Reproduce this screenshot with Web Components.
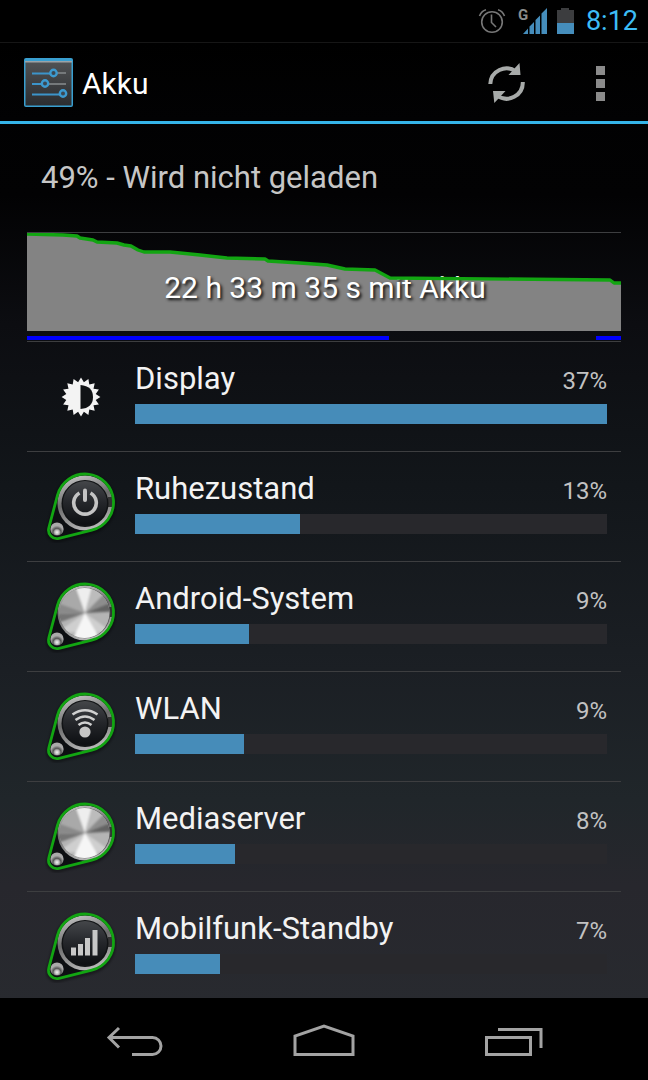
<!DOCTYPE html>
<html lang="de">
<head>
<meta charset="utf-8">
<meta name="viewport" content="width=device-width, initial-scale=1">
<title>Akku</title>
<style>
  html { background: #000; }
  body { margin: 0; font-family: Roboto, "Open Sans", sans-serif; color: #f3f3f3; }
</style>
</head>
<body>
<battery-screen>
  <status-bar slot="status" time="8:12"></status-bar>
  <action-bar slot="header">Akku</action-bar>
  <battery-summary>49% - Wird nicht geladen</battery-summary>
  <battery-chart>22 h 33 m 35 s mit Akku</battery-chart>
  <usage-row icon="display" percent="37%" level="1000">Display</usage-row>
  <usage-row icon="power" percent="13%" level="350">Ruhezustand</usage-row>
  <usage-row icon="metal" percent="9%" level="241">Android-System</usage-row>
  <usage-row icon="wifi" percent="9%" level="230">WLAN</usage-row>
  <usage-row icon="metal" percent="8%" level="211">Mediaserver</usage-row>
  <usage-row icon="signal" percent="7%" level="180">Mobilfunk-Standby</usage-row>
  <nav-bar slot="nav"></nav-bar>
</battery-screen>

<script>
class Base extends HTMLElement {
  constructor() {
    super();
    this.attachShadow({ mode: 'open' });
  }
  connectedCallback() {
    this.shadowRoot.innerHTML = this.render();
  }
}

customElements.define('battery-screen', class extends Base {
  render() {
    return `<style>
      :host { display: flex; flex-direction: column; min-height: 100vh;
        background: linear-gradient(#000 0, #020203 18%, #0c0d11 30%, #12161a 45%, #1b1f24 62%, #20262a 74%, #27272d 82%, #282a2f 93%); }
      main { flex: 1; padding: 0 27px; }
    </style>
    <slot name="status"></slot>
    <slot name="header"></slot>
    <main><slot></slot></main>
    <slot name="nav"></slot>`;
  }
});

customElements.define('status-bar', class extends Base {
  render() {
    return `<style>
      :host { display: flex; align-items: center; justify-content: flex-end; height: 42px;
        padding-right: 10px; background: #000; border-bottom: 1px solid #161616; }
      svg { display: block; flex: none; }
      time { margin-left: 11px; font-size: 27px; line-height: 44px; color: #3dbdf5; }
    </style>
    <svg width="98" height="42" viewBox="477 0 98 42" role="img" aria-label="Wecker, Mobilfunk, Akku">
      <g fill="none" stroke="#777" stroke-width="1.6">
        <circle cx="492" cy="22" r="10.3"/>
        <path d="M491.500 14.500V22.500L496 27M479.500 16Q481.500 11 486 9.800M504.500 16Q502.500 11 498 9.800"/>
      </g>
      <text x="518" y="20" font-family="Roboto, sans-serif" font-weight="700" font-size="15" fill="#8c8c8c">G</text>
      <path fill="#458dbb" d="M523 34L528 28.500V34ZM529.500 26.500L534 22V34H529.500ZM535.500 20L540 15.500V34H535.500ZM541.500 13.500L547 8V34H541.500Z"/>
      <path fill="#3c3d3f" d="M557 10H561V8H569V10H574V34H557Z"/>
      <path fill="#458dbb" d="M557 23H574V34H557Z"/>
    </svg>
    <time>${this.getAttribute('time')}</time>`;
  }
});

customElements.define('action-bar', class extends Base {
  render() {
    return `<style>
      :host { display: flex; align-items: center; height: 78px; padding: 0 21px 0 24px;
        background: linear-gradient(#000, #020203); border-bottom: 3px solid #35b4e8; }
      svg { display: block; }
      h1 { flex: 1; margin: 0 0 0 9px; padding-top: 4px; font-size: 30px; line-height: 40px; font-weight: 400; color: #fff; }
      button { display: grid; place-items: center; height: 78px; width: 54px; padding: 2px 0 0;
        border: 0; background: none; }
      button + button { margin-left: 40px; }
    </style>
    <svg width="49" height="49" viewBox="0 0 49 49" aria-hidden="true">
      <defs><linearGradient id="g" x2="0" y2="1"><stop stop-color="#505254"/><stop offset="1" stop-color="#2b2d30"/></linearGradient></defs>
      <rect width="49" height="49" rx="2" fill="#399fd0"/>
      <rect x="1.500" y="4" width="46" height="43.500" fill="url(#g)"/>
      <rect x="1" y="3" width="47" height="1.500" fill="#9ba3a7"/>
      <g stroke-width="1.800">
        <path stroke="#75797b" d="M30 15H42M22 26H42"/>
        <path stroke="#3c94c9" d="M8 15.500H27M8 26H18M8 36.500H36"/>
      </g>
      <g fill="#3b4853" stroke="#3c9ad0" stroke-width="2.400">
        <circle cx="29.500" cy="15" r="3.200"/><circle cx="21" cy="25.500" r="3.200"/><circle cx="39" cy="35.500" r="3.200"/>
      </g>
    </svg>
    <h1><slot></slot></h1>
    <button aria-label="Aktualisieren">
      <svg width="40" height="42" viewBox="486 62 40 42">
        <g fill="none" stroke="#a7aaa9" stroke-width="4">
          <path d="M490.300 84A16.200 16.200 0 0 1 516 71.500M522.800 82A16.200 16.200 0 0 1 497 95.500"/>
        </g>
        <path fill="#a7aaa9" d="M519.500 63L520.500 75H508.500ZM493 91H505.500L494.300 103Z"/>
      </svg>
    </button>
    <button aria-label="Weitere Optionen">
      <svg width="9" height="35" viewBox="0 0 9 35"><path fill="#8b8b8b" d="M0 0H9V9H0ZM0 13H9V22H0ZM0 26H9V35H0Z"/></svg>
    </button>`;
  }
});

customElements.define('battery-summary', class extends Base {
  render() {
    return `<style>
      :host { display: block; padding: 34px 14px; font-size: 31px; line-height: 40px; color: #c6c6c6;
        border-bottom: 1px solid #3d3e40; }
    </style><slot></slot>`;
  }
});

customElements.define('battery-chart', class extends Base {
  render() {
    const line = '0,2 36,3 50,4 53,6 66,8 70,10 90,11 97,13 104,14 111,18 117,20 143,20 173,23 200,26 238,27 241,29 273,31 300,33 318,37 348,38 363,46 583,48 587,51 594,51';
    return `<style>
      :host { display: grid; height: 108px; border-bottom: 1px solid #3d3e40; }
      svg, p { grid-area: 1 / 1; }
      svg { display: block; width: 100%; height: 108px; }
      p { margin: 0; align-self: center; text-align: center; padding: 2px 0 0 2px; font-size: 30px; line-height: 40px;
        color: #fff; text-shadow: 2px 2px 3px #111; }
    </style>
    <svg viewBox="0 1 594 108" preserveAspectRatio="none" aria-hidden="true">
      <polygon fill="#838383" points="${line} 594,99 0,99"/>
      <path fill="#00f" d="M0 104H362V108H0ZM569 104H594V108H569Z"/>
    </svg>
    <p><slot></slot></p>
    <svg viewBox="0 1 594 108" preserveAspectRatio="none" aria-hidden="true">
      <polyline fill="none" stroke="#12a512" stroke-width="3.400" stroke-linejoin="round" points="${line}"/>
    </svg>`;
  }
});

const wedge = (a, b, fill) => {
  const p = d => `${(40 + 34 * Math.cos(d * Math.PI / 180)).toFixed(1)} ${(33 + 34 * Math.sin(d * Math.PI / 180)).toFixed(1)}`;
  return `<path fill="${fill}" d="M40 33L${p(a)}L${p(b)}Z"/>`;
};

const symbols = {
  power: `<g fill="none" stroke="#c4c4c4" stroke-width="3.600"><path d="M34.500 23A11.300 11.300 0 1 0 45.500 23"/><path stroke-width="4" stroke-linecap="round" d="M40 20.500V30"/></g>`,
  wifi: `<g fill="none" stroke="#d0d0d0" stroke-width="2.600"><path d="M27.500 24.500Q40 16 52.500 24.500M30.500 30Q40 23 49.500 30M33.500 35Q40 30 46.500 35"/></g><circle cx="40" cy="42" r="5.600" fill="#c6c6c6"/>`,
  signal: `<path fill="#c8c8c8" d="M26 37.500H31V45.500H26ZM33 34H38V45.500H33ZM40 28H45V45.500H40ZM47.500 20H52.500V45.500H47.500Z"/>`
};

function knob(kind) {
  const metal = kind === 'metal';
  return `<svg width="72" height="72" viewBox="0 1 72 72" aria-hidden="true">
    <defs>
      <linearGradient id="ring" x1=".3" x2=".6" y2="1"><stop stop-color="#c2c2c2"/><stop offset=".45" stop-color="#6c6c6c"/><stop offset="1" stop-color="#bcbcbc"/></linearGradient>
      <linearGradient id="dark" x2="0" y2="1"><stop stop-color="#45474a"/><stop offset=".5" stop-color="#24262a"/><stop offset="1" stop-color="#0d0f12"/></linearGradient>
      <radialGradient id="ball" cy=".75"><stop stop-color="#f4f4f4"/><stop offset=".35" stop-color="#b5b5b5"/><stop offset=".6" stop-color="#555"/><stop offset="1" stop-color="#aaa"/></radialGradient>
      <clipPath id="disc"><circle cx="39.500" cy="33" r="25"/></clipPath>
      <filter id="soft"><feGaussianBlur stdDeviation="1.300"/></filter>
    </defs>
    <path d="M12.500 25.200A28.500 28.500 0 1 1 46.800 60.200L14 68.300A8.500 8.500 0 0 1 3.800 57.800Z" transform="translate(0 1.500)" stroke="#000" stroke-width="5" opacity=".35" filter="url(#soft)"/>
    <path fill="#0d0f12" d="M12.500 25.200A28.500 28.500 0 1 1 46.800 60.200L14 68.300A8.500 8.500 0 0 1 3.800 57.800Z"/>
    <circle cx="40" cy="33" r="27.500" fill="url(#ring)"/>
    <path d="M63 27L67 27V37H63Z" fill="#333"/>
    ${metal ? `<circle cx="40" cy="33" r="25.300" fill="#555"/>
      <g clip-path="url(#disc)"><circle cx="40" cy="33" r="27" fill="#b4b4b4"/>
      <g filter="url(#soft)">${wedge(35, 145, '#cfcfcf')}${wedge(60, 115, '#f6f6f6')}${wedge(200, 250, '#a9a9a9')}${wedge(250, 285, '#eee')}${wedge(285, 315, '#bcbcbc')}${wedge(315, 338, '#8d8d8d')}${wedge(338, 357, '#646464')}${wedge(160, 178, '#747474')}${wedge(178, 200, '#8a8a8a')}</g></g>`
    : `<circle cx="40" cy="33.500" r="23.500" fill="#111315"/><circle cx="40" cy="33" r="22" fill="url(#dark)"/>${symbols[kind]}`}
    <circle cx="12" cy="59" r="6.600" fill="url(#ball)"/>
    <path fill="none" stroke="#12a512" stroke-width="2.800" d="M12.500 25.200A28.500 28.500 0 1 1 46.800 60.200L14 68.300A8.500 8.500 0 0 1 3.800 57.800Z"/>
  </svg>`;
}

function sun() {
  const pts = [];
  for (let i = 0; i < 32; i++) {
    const r = i % 2 ? 15 : 19.4, a = (i * 11.25 - 90) * Math.PI / 180;
    pts.push(`${(20 + r * Math.cos(a)).toFixed(1)},${(20 + r * Math.sin(a)).toFixed(1)}`);
  }
  return `<svg width="40" height="40" viewBox="0 0 40 40" aria-hidden="true">
    <polygon fill="#f3f3f3" points="${pts.join(' ')}"/>
    <path fill="#101215" d="M19.500 8Q32 9 32 20T19.500 32Z"/>
  </svg>`;
}

customElements.define('usage-row', class extends Base {
  render() {
    const icon = this.getAttribute('icon');
    return `<style>
      :host { display: block; border-bottom: 1px solid #3d3e40; }
      :host(:last-of-type) { border-bottom: 0; margin-bottom: -3px; }
      a { display: grid; grid-template-columns: 108px 1fr; align-items: center; color: inherit;
        text-decoration: none; padding-right: 14px; }
      .icon { display: grid; place-items: center; }
      svg { display: block; }
      .body { display: flex; flex-direction: column; gap: 6px; padding: 18px 0 27px; }
      .head { display: flex; justify-content: space-between; align-items: baseline; line-height: 38px; height: 38px; }
      .name { font-size: 31px; }
      .value { font-size: 24px; color: #c2c2c2; }
      progress { display: block; appearance: none; -webkit-appearance: none; width: 100%; height: 20px;
        border: 0; background: #28282c; }
      progress::-webkit-progress-bar { background: #28282c; }
      progress::-webkit-progress-value { background: #468cb9; }
      progress::-moz-progress-bar { background: #468cb9; }
    </style>
    <a href="#">
      <span class="icon">${icon === 'display' ? sun() : knob(icon)}</span>
      <span class="body">
        <span class="head"><span class="name" id="name"><slot></slot></span><span class="value">${this.getAttribute('percent')}</span></span>
        <progress max="1000" value="${this.getAttribute('level')}" aria-labelledby="name"></progress>
      </span>
    </a>`;
  }
});

customElements.define('nav-bar', class extends Base {
  render() {
    return `<style>
      :host { display: block; background: #000; }
      nav { display: flex; padding: 0 40px; }
      button { flex: 1; display: grid; place-items: center; height: 82px; padding: 0; border: 0; background: none; }
      svg { display: block; fill: none; stroke: #a3a3a3; stroke-width: 3; }
    </style>
    <nav aria-label="System">
      <button aria-label="Zurück"><svg width="64" height="82" viewBox="103 998 64 82"><path d="M109 1037.500H152.500A8.500 8.500 0 0 1 152.500 1054.500H132M119 1028L109 1037.500L119 1047.500"/></svg></button>
      <button aria-label="Startseite"><svg width="64" height="82" viewBox="292 998 64 82"><path d="M295 1054.500V1036L324 1026L353 1036V1054.500Z"/></svg></button>
      <button aria-label="Letzte Apps"><svg width="64" height="82" viewBox="482 998 64 82"><path d="M487.500 1037.500H531.500V1054.500H487.500ZM499 1029.500H542V1048"/></svg></button>
    </nav>`;
  }
});
</script>
</body>
</html>
